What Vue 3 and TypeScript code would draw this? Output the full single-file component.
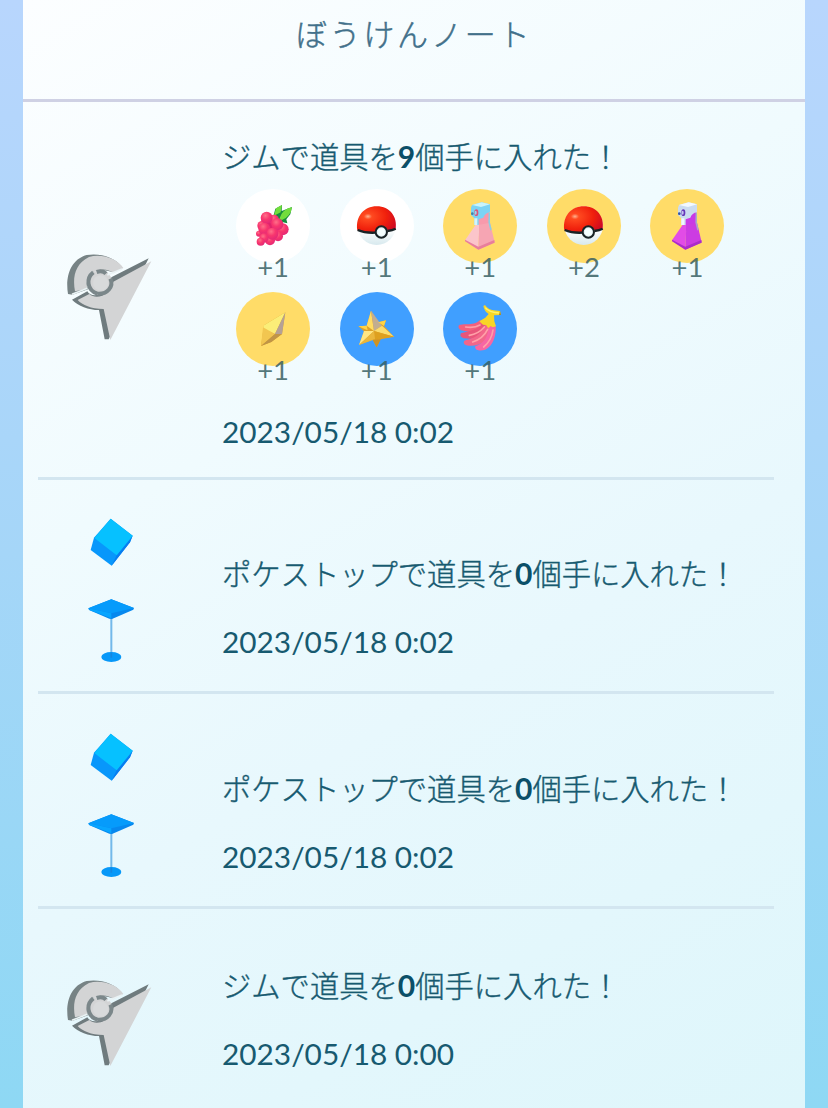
<template>
  <div class="page">
    <main class="note">
      <header class="title">ぼうけんノート</header>
      <section v-for="(log, i) in logs" :key="i" class="log" :class="[log.type, { big: log.items.length }]">
        <div class="mark">
          <svg v-if="log.type === 'gym'" class="gym-icon" viewBox="0 0 360 330">
            <g class="soft">
              <path d="M54 162 C46 115 58 60 110 45 C150 38 195 52 215 80 L190 98 C176 90 144 86 124 98 C110 112 108 132 114 148 L68 164 Z" fill="#778385" />
              <path d="M75 154 C67 112 75 72 117 51 C154 40 202 56 220 84 L190 100 C174 84 144 86 124 99 C109 112 108 136 113 146 Z" fill="#d3d4d5" />
              <path d="M66 179 L112 154 C124 174 166 174 184 112 L296 55 L176 298 L164 298 L147 210 C116 210 84 198 66 179 Z" fill="#6f7b7e" />
              <path d="M83 180 L118 162 C140 182 184 164 190 125 L304 64 L181 300 L161 207 C122 206 98 196 83 180 Z" fill="#d3d4d5" />
              <circle cx="150" cy="128" r="37" fill="#d3d4d5" />
              <path d="M130 97 C108 114 110 150 142 161 M140 96 Q158 90 168 101 M181 116 C192 140 172 164 142 161" fill="none" stroke="#7b878a" stroke-width="12" />
              <circle cx="152" cy="129" r="23" fill="#d8dadb" />
              <path d="M66 163 L112 145 M172 105 L216 87" stroke="#eaf3f5" stroke-width="5" />
            </g>
          </svg>
          <svg v-else class="stop-icon" viewBox="0 0 270 510">
            <path d="M122 41 L188 92 L180 112 L125 182 L62 135 L72 98 Z" fill="#0897fb" />
            <path d="M188 92 L180 112 L125 182 L140 151 Z" fill="#087df0" />
            <path d="M122 41 L188 92 L140 151 L73 99 Z" fill="#06c1ff" />
            <path d="M124 338 V450" stroke="#73b9ea" stroke-width="6" />
            <path d="M55 310 L124 283 L192 309 L190 314 L126 342 L118 341 L57 315 Z" fill="#0788ee" />
            <path d="M55 310 L124 283 L192 309 L124 325 Z" fill="#069bfb" />
            <path d="M55 310 L124 325 L124 340 L60 316 Z" fill="#08a5ff" />
            <ellipse cx="124" cy="456" rx="30" ry="15" fill="#0798f8" />
            <path d="M124 443 V458" stroke="#1685df" stroke-width="5" />
          </svg>
        </div>
        <div class="body">
          <p class="text">{{ log.place }}で道具を<b>{{ log.count }}</b>個手に入れた！</p>
          <ul v-if="log.items.length" class="items">
            <li v-for="(item, n) in log.items" :key="n">
              <svg class="item-icon" :class="item.color" viewBox="0 0 222 222">
                <g v-if="item.icon === 'razz'">
                  <path d="M112 82 L118 59 L138 48 L137 66 L168 54 L163 76 L151 91 L154 103 L135 98 Z" fill="#168c3d" />
                  <path d="M114 80 L120 58 L138 48 L134 70 Z M130 90 Q138 60 168 55 Q164 83 138 93 Z" fill="#72dd3c" />
                  <path d="M80 84 L130 94 L150 122 L124 146 L96 162 L72 154 L70 110 Z" fill="#e0246a" />
                  <circle v-for="(b, k) in berries" :key="k" :cx="b[0]" :cy="b[1]" :r="b[2]" fill="url(#berry)" />
                </g>
                <g v-else-if="item.icon === 'ball'">
                  <circle cx="110" cy="110" r="58" fill="url(#white)" />
                  <path d="M52 124 C46 82 72 52 110 52 C150 52 173 84 167 120 L144 128 C138 106 112 108 107 132 Q77 132 52 124 Z" fill="url(#red)" />
                  <path d="M53 123 Q76 133 107 131 M142 126 Q158 124 167 119" fill="none" stroke="#182326" stroke-width="7" />
                  <circle cx="124" cy="129" r="17" fill="#deedf1" stroke="#182326" stroke-width="6" />
                  <circle cx="124" cy="129" r="11" fill="#f4ffff" />
                </g>
                <g v-else-if="item.icon === 'potion' || item.icon === 'hyper'" :class="item.icon">
                  <path class="back" d="M98 78 L139 64 V101 L145 122 L101 126 Z" />
                  <path class="left" d="M100 104 L109 107 L106 182 L66 154 Z" />
                  <path class="right" d="M109 107 L141 101 L155 160 L106 182 Z" />
                  <path class="edge" d="M66 152 L106 173 L154 153 L155 161 L106 182 L66 157 Z" />
                  <path class="glass" d="M137 70 L141 72 V101 L146 121 L142 125 L136 100 Z" />
                  <path class="cap" d="M87 48 L116 40 L141 46 V70 Q126 72 121 86 L107 91 V108 L94 108 V88 L84 78 L84 56 Z" />
                  <path class="cap-top" d="M87 48 L116 40 L141 46 L114 54 Z" />
                  <path class="cap-side" d="M94 88 H103 V108 H94 Z" />
                  <ellipse class="knob" cx="100" cy="71" rx="6" ry="10" />
                  <ellipse class="knob-hole" cx="98" cy="71" rx="3" ry="6" />
                  <circle class="knob-end" cx="88" cy="74" r="4" />
                </g>
                <g v-else-if="item.icon === 'revive'">
                  <path d="M148 61 L84 100 L75 162 L106 150 L138 126 Z" fill="#d8a32c" />
                  <path d="M148 61 L84 100 L81 110 L117 126 Z" fill="#fbee78" />
                  <path d="M148 61 L117 126 L138 127 Z" fill="#b5a196" />
                  <path d="M81 106 L117 126 L75 162 Z" fill="#f2c650" />
                  <path d="M138 126 L117 126 L75 162 L106 150 Z" fill="#c09547" />
                </g>
                <g v-else-if="item.icon === 'star'">
                  <path d="M93 56 L115 91 L138 85 L132 102 L162 134 L122 142 L110 166 L98 143 L57 159 L72 118 L55 103 L80 101 Z" fill="#dda12a" />
                  <path d="M93 56 L80 101 L102 117 Z" fill="#ffdc62" />
                  <path d="M93 56 L102 117 L126 101 Z" fill="#c2ad90" />
                  <path d="M115 91 L138 85 L132 102 Z M55 103 L80 101 L83 115 Z" fill="#ffd344" />
                  <path d="M102 117 L126 101 L162 134 Z" fill="#fbdc6e" />
                  <path d="M102 117 L162 134 L105 142 Z" fill="#dea01f" />
                  <path d="M72 117 L102 117 L57 159 Z" fill="#ffe684" />
                  <path d="M102 117 L105 142 L57 159 Z" fill="#eab63c" />
                  <path d="M98 143 L122 142 L110 166 Z" fill="#cf9324" />
                </g>
                <g v-else>
                  <path d="M111 84 C92 104 66 92 48 99 Q43 108 54 115 L92 122 L137 102 Z" fill="#f4607c" />
                  <path d="M120 91 C105 116 76 118 54 124 Q48 134 62 139 L100 142 L146 106 Z" fill="#e8557a" />
                  <path d="M128 94 C114 134 88 140 64 146 Q58 154 70 160 C107 168 146 144 153 103 Z" fill="#f2668a" />
                  <path d="M137 99 C138 136 119 156 97 163 Q94 172 106 175 C142 182 161 139 158 103 Z" fill="#f766a4" />
                  <path d="M68 105 Q94 109 111 99 M79 130 Q106 126 124 105 M89 150 Q120 140 134 112 M122 165 Q146 145 150 114" fill="none" stroke="#ffa0a8" stroke-width="5" stroke-linecap="round" />
                  <path d="M121 42 L126 39 Q136 54 152 55 L171 57 L174 69 L153 70 L154 88 L159 103 L149 106 L143 102 L136 109 L129 99 L120 98 L109 88 L127 77 L137 66 Q124 58 121 42 Z" fill="#f8d527" />
                  <path d="M127 47 Q137 62 170 63" fill="none" stroke="#fff36b" stroke-width="4" />
                  <path d="M171 57 L174 69 L168 69 Z" fill="#a78625" />
                </g>
              </svg>
              <span class="amount">+{{ item.amount }}</span>
            </li>
          </ul>
          <time class="date">{{ log.date }}</time>
        </div>
      </section>
    </main>
    <svg class="defs">
      <defs>
        <radialGradient id="berry" cx="40%" cy="32%" r="70%">
          <stop offset="0" stop-color="#ff7088" />
          <stop offset="0.5" stop-color="#f8366e" />
          <stop offset="1" stop-color="#e32876" />
        </radialGradient>
        <radialGradient id="red" cx="28%" cy="38%" r="80%">
          <stop offset="0" stop-color="#ffb28f" />
          <stop offset="0.13" stop-color="#ff4a20" />
          <stop offset="0.6" stop-color="#f0200c" />
          <stop offset="1" stop-color="#cc0824" />
        </radialGradient>
        <linearGradient id="white" x1="0" y1="0" x2="0" y2="1">
          <stop offset="0.6" stop-color="#ffffff" />
          <stop offset="1" stop-color="#d7e9ee" />
        </linearGradient>
      </defs>
    </svg>
  </div>
</template>

<script setup lang="ts">
import { ref } from 'vue'

interface Item {
  icon: string
  color: string
  amount: number
}
interface Log {
  type: 'gym' | 'stop'
  place: string
  count: number
  date: string
  items: Item[]
}

// cx, cy, r
const berries = [
  [140, 121, 18], [126, 142, 15], [102, 154, 15], [69, 134, 9], [78, 110, 14],
  [114, 92, 15], [92, 86, 18], [124, 106, 18], [85, 119, 18], [109, 134, 18],
  [84, 147, 14], [74, 158, 12]
]

const logs = ref<Log[]>([
  {
    type: 'gym',
    place: 'ジム',
    count: 9,
    date: '2023/05/18 0:02',
    items: [
      { icon: 'razz', color: 'white', amount: 1 },
      { icon: 'ball', color: 'white', amount: 1 },
      { icon: 'potion', color: 'yellow', amount: 1 },
      { icon: 'ball', color: 'yellow', amount: 2 },
      { icon: 'hyper', color: 'yellow', amount: 1 },
      { icon: 'revive', color: 'yellow', amount: 1 },
      { icon: 'star', color: 'blue', amount: 1 },
      { icon: 'nanab', color: 'blue', amount: 1 }
    ]
  },
  { type: 'stop', place: 'ポケストップ', count: 0, date: '2023/05/18 0:02', items: [] },
  { type: 'stop', place: 'ポケストップ', count: 0, date: '2023/05/18 0:02', items: [] },
  { type: 'gym', place: 'ジム', count: 0, date: '2023/05/18 0:00', items: [] }
])
</script>

<style>
body {
  margin: 0;
}
</style>

<style scoped>
.page {
  box-sizing: border-box;
  height: 1108px;
  padding: 0 23px;
  overflow: hidden;
  background: linear-gradient(#b8d6fd, #a5d6f8 50%, #8ed8f4);
  font-family: Lato, "Noto Sans CJK JP", sans-serif;
  color: #175a70;
}
.note {
  height: 1108px;
  background: linear-gradient(150deg, #fcfeff 0%, #f0fbfe 36%, #e8f8fd 60%, #def6fb 100%);
}
.title {
  box-sizing: border-box;
  height: 102px;
  padding-top: 14px;
  border-bottom: 3px solid #cfd1e4;
  line-height: 40px;
  font-size: 31px;
  font-weight: 300;
  letter-spacing: 2.8px;
  text-align: center;
  color: #42708a;
  -webkit-text-stroke: 0.5px #42708a;
}
.log {
  box-sizing: border-box;
  display: flex;
  width: 736px;
  height: 214.5px;
  margin-left: 15px;
  padding-top: 74.5px;
  border-bottom: 3px solid #d3e6f0;
}
.log.gym {
  padding-top: 57px;
}
.log.big {
  height: 377.5px;
  padding-top: 35px;
}
.log:last-child {
  height: 199px;
  border-bottom: none;
}
.mark {
  flex: none;
  width: 184px;
}
.gym-icon {
  display: block;
  width: 120px;
  height: 110px;
  margin-left: 12px;
}
.big .gym-icon {
  margin-top: 103px;
}
.soft {
  filter: blur(2px);
}
.stop-icon {
  display: block;
  width: 90px;
  height: 170px;
  margin: -49px 0 0 32px;
}
.body {
  flex: 1;
}
.text {
  margin: 0;
  line-height: 40px;
  font-size: 29.3px;
  font-weight: 300;
  white-space: nowrap;
  -webkit-text-stroke: 0.4px #175a70;
}
.text b {
  font-size: 30px;
  line-height: 1;
  font-weight: 700;
  color: #0b4f68;
  -webkit-text-stroke: 0;
}
.items {
  display: grid;
  grid-template-columns: repeat(5, 103.6px);
  grid-auto-rows: 103px;
  margin: 12px 0 0 -0.7px;
  padding: 0;
  list-style: none;
}
.items li {
  display: flex;
  flex-direction: column;
  align-items: center;
}
.item-icon {
  flex: none;
  width: 74px;
  height: 74px;
  border-radius: 50%;
}
.white {
  background: #ffffff;
}
.yellow {
  background: #ffdc68;
}
.blue {
  background: #409fff;
}
.amount {
  position: relative;
  margin-top: -11px;
  line-height: 30px;
  font-size: 27.5px;
  color: rgba(56, 96, 99, 0.85);
}
.date {
  display: block;
  margin-top: 28.5px;
  line-height: 40px;
  font-size: 29.8px;
}
.stop .date {
  margin-top: 28px;
}
.big .date {
  margin-top: 17px;
}
.potion .back { fill: #f79aac; }
.potion .left { fill: #fbc5ca; }
.potion .right { fill: #f6a5b3; }
.potion .edge { fill: #e87e9b; }
.potion .glass { fill: #8ccfe0; }
.potion .cap { fill: #7bd3f4; }
.potion .cap-top { fill: #c9f3fb; }
.potion .cap-side { fill: #d5f4f9; }
.potion .knob { fill: #d8557b; }
.potion .knob-hole { fill: #9ad9f2; }
.potion .knob-end { fill: #4383a5; }
.hyper .back { fill: #c93ae6; }
.hyper .left { fill: #e24ce6; }
.hyper .right { fill: #cc3ce2; }
.hyper .edge { fill: #ab2cc9; }
.hyper .glass { fill: #a9a8c8; }
.hyper .cap { fill: #cbdcf0; }
.hyper .cap-top { fill: #f2f9ff; }
.hyper .cap-side { fill: #eff6ff; }
.hyper .knob { fill: #6536b8; }
.hyper .knob-hole { fill: #c3c4f0; }
.hyper .knob-end { fill: #3154a5; }
.defs {
  position: absolute;
  width: 0;
  height: 0;
}
</style>
